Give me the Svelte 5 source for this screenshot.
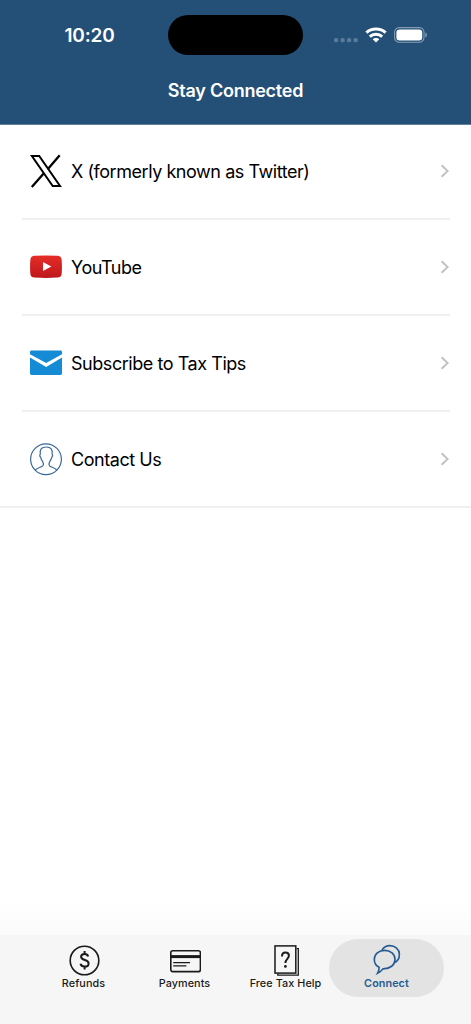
<script>
  const links = [
    { id: 'x', label: 'X (formerly known as Twitter)' },
    { id: 'youtube', label: 'YouTube' },
    { id: 'mail', label: 'Subscribe to Tax Tips' },
    { id: 'contact', label: 'Contact Us' }
  ];

  const tabs = [
    { id: 'refunds', label: 'Refunds' },
    { id: 'payments', label: 'Payments' },
    { id: 'help', label: 'Free Tax Help' },
    { id: 'connect', label: 'Connect' }
  ];

  let active = $state('connect');
</script>

<div class="screen">
  <header>
    <div class="status">
      <span class="time">10:20</span>
      <div class="island"></div>
      <div class="indicators">
        <svg class="signal" width="25" height="6" viewBox="0 0 25 6" fill="#587a9b">
          <rect x="0" y="1" width="4.2" height="4.2" rx="1.5" />
          <rect x="6.5" y="1" width="4.2" height="4.2" rx="1.5" />
          <rect x="13" y="1" width="4.2" height="4.2" rx="1.5" />
          <rect x="19.5" y="1" width="4.2" height="4.2" rx="1.5" />
        </svg>
        <svg class="wifi" width="22" height="16" viewBox="0 0 22 16" fill="none" stroke="#fff" stroke-width="3">
          <path d="M1.4 5.7C6.7.9 15.3.9 20.6 5.7" />
          <path d="M4.8 9.6C8.2 6.4 13.8 6.4 17.2 9.6" />
          <path d="M11 15.6 7.7 12.3C9.5 10.5 12.5 10.5 14.3 12.3Z" fill="#fff" stroke="none" />
        </svg>
        <svg class="battery" width="34" height="16" viewBox="0 0 34 16">
          <rect x=".6" y=".6" width="29.4" height="14.6" rx="4.7" fill="none" stroke="#869db5" stroke-width="1.1" />
          <rect x="2.4" y="2.4" width="25.8" height="11" rx="3.2" fill="#fff" />
          <path d="M31.3 5.4Q33 6 33 7.9T31.3 10.4Z" fill="#869db5" />
        </svg>
      </div>
    </div>
    <h1>Stay Connected</h1>
  </header>

  <main>
    {#each links as link}
      <div class="row">
        <div class="row-inner">
          <svg class="row-icon" width="32" height="34" viewBox="0 0 32 34">
            {#if link.id === 'x'}
              <g fill="none" stroke="#000" stroke-width="2">
                <path d="M1.9 2H9.2L30 32H22.7Z" />
                <path d="M29.7 1.2 17.7 15.2M14.1 19 1.8 32.9" stroke-width="2.3" />
              </g>
            {:else if link.id === 'youtube'}
              <defs>
                <linearGradient id="yt" x1="0" y1="0" x2="0" y2="1">
                  <stop offset="0" stop-color="#e52d27" />
                  <stop offset="1" stop-color="#bf171d" />
                </linearGradient>
              </defs>
              <path
                d="M4.5 5.8Q16 5 27.5 5.8Q31 6 31.6 9.2Q32.3 16.7 31.6 24.2Q31 27.4 27.5 27.6Q16 28.5 4.5 27.6Q1 27.4.4 24.2Q-.3 16.7.4 9.2Q1 6 4.5 5.8Z"
                fill="url(#yt)"
              />
              <path d="M13 12 21.3 16.4 13 20.9Z" fill="#fff" />
            {:else if link.id === 'mail'}
              <path d="M1.5 4.6H30.5Q32 4.6 32 6V8.3L16.2 17 0 8.3V6Q0 4.6 1.5 4.6Z" fill="#148bd4" />
              <path d="M0 11.6 16.2 21 32 11.6V27.6Q32 29 30.5 29H1.5Q0 29 0 27.6Z" fill="#148bd4" />
            {:else}
              <g fill="none" stroke="#38689b" stroke-width="1.2">
                <circle cx="16" cy="17.3" r="15.4" />
                <path d="M5.2 28C7.5 25.6 11.5 25.2 12.8 23.9C13.6 22.8 13.4 20.8 12.6 19.4C11.5 18.2 11 17 10.7 15.4C9.8 14.5 9.7 12.8 10.3 11.9C9.7 7.6 11.2 5 16.2 5S22.7 7.6 22.1 11.9C22.7 12.8 22.6 14.5 21.7 15.4C21.4 17 20.9 18.2 19.8 19.4C19 20.8 18.8 22.8 19.6 23.9C20.9 25.2 24.5 25.6 26.8 28" />
              </g>
            {/if}
          </svg>
          <span class="label">{link.label}</span>
          <svg class="chevron" width="10" height="14" viewBox="0 0 10 14">
            <path d="M1.6 1.2 7.6 7 1.6 12.8" fill="none" stroke="#c2c2c4" stroke-width="2" />
          </svg>
        </div>
      </div>
    {/each}
  </main>

  <div class="fade"></div>
  <nav>
    {#each tabs as tab}
      <button class="tab" class:active={active === tab.id} onclick={() => (active = tab.id)}>
        <svg width="32" height="32" viewBox="0 0 32 32" fill="none" stroke="currentColor">
          {#if tab.id === 'refunds'}
            <circle cx="16.5" cy="16.5" r="14.3" stroke-width="1.6" />
            <path d="M20.2 12.5C19.7 10.7 18.4 9.9 16.6 9.9C14.4 9.9 13.1 11 13.1 12.7C13.1 16.9 20.6 15.2 20.6 19.4C20.6 21.4 19 22.6 16.6 22.6C14.4 22.6 12.9 21.6 12.5 19.8M16.6 7V10.2M16.6 22.3V25.5" stroke-width="2" />
          {:else if tab.id === 'payments'}
            <rect x="1.8" y="6.7" width="29.6" height="20.9" rx="2" stroke-width="1.6" />
            <path d="M1.8 12.6H31.4" stroke-width="3" />
            <path d="M4.2 18.7H21M4.2 21.9H17.4" stroke-width="1.2" />
          {:else if tab.id === 'help'}
            <rect x="5" y="1.9" width="20.8" height="27.2" stroke-width="1.5" />
            <path d="M26.5 4.6H28.3V31.2H7.8V29.8" stroke-width="1.3" />
            <path d="M12 12.4C12 9.8 13.3 8.6 15.4 8.6C17.6 8.6 18.9 9.8 18.9 11.8C18.9 14.8 15.4 15 15.4 19" stroke-width="2" />
            <circle cx="15.4" cy="22.4" r="1.4" fill="currentColor" stroke="none" />
          {:else}
            <g stroke-width="1.6">
              <path d="M11 6C12.8 3.1 15.6 1.6 18.8 1.6C24.2 1.6 28.4 5.4 28.4 10.3C28.4 14.6 26 18 22.6 18.8" />
              <path d="M13.7 6.4C7.8 6.4 3.3 10.2 3.3 15.4C3.3 19 5.1 21.7 8.1 23.3C8.2 25.6 7.6 27.6 6.5 29.4C8.6 28.4 10.6 26.7 11.9 24.9C19 25 24 20.9 24 15.4C24 10.2 19.5 6.4 13.7 6.4Z" />
            </g>
          {/if}
        </svg>
        <span>{tab.label}</span>
      </button>
    {/each}
  </nav>
</div>

<style>
  :global(body) {
    margin: 0;
    background: #fff;
  }

  .screen {
    display: flex;
    flex-direction: column;
    height: 1024px;
    overflow: hidden;
    font-family: Inter, Roboto, sans-serif;
    color: #000;
  }

  header {
    box-sizing: border-box;
    flex: none;
    height: 125px;
    padding-top: 15px;
    background: #245077;
    border-bottom: 1px solid #63809b;
    color: #fff;
  }

  .status {
    display: grid;
    grid-template-columns: 168px 135px 1fr;
    height: 40px;
    align-items: center;
  }

  .time {
    padding-left: 11px;
    text-align: center;
    font-size: 19px;
    font-weight: 600;
    letter-spacing: -0.2px;
  }

  .island {
    height: 40px;
    border-radius: 20px;
    background: #000;
  }

  .indicators {
    display: flex;
    align-items: center;
    padding-left: 31px;
  }

  .signal {
    margin-top: 10px;
  }

  .wifi {
    margin-left: 6px;
  }

  .battery {
    margin-left: 7px;
  }

  h1 {
    margin: 24px 0 0;
    text-align: center;
    font-size: 18px;
    line-height: 24px;
    font-weight: 600;
    letter-spacing: -0.24px;
  }

  main {
    flex: 1;
    margin-top: -1px;
  }

  .row {
    padding: 0 21px 0 22px;
  }

  .row-inner {
    box-sizing: border-box;
    display: flex;
    align-items: center;
    height: 96px;
    padding: 0 0 1px 8px;
    border-bottom: 2px solid #f0f0f0;
  }

  .row:last-child {
    padding: 0;
  }

  .row:last-child .row-inner {
    padding: 0 21px 1px 30px;
  }

  .label {
    flex: 1;
    margin-left: 9px;
    padding-top: 2px;
    font-size: 18px;
    letter-spacing: -0.45px;
    white-space: nowrap;
  }

  .fade {
    height: 35px;
    background: linear-gradient(#fff, #fbfbfb);
  }

  nav {
    box-sizing: border-box;
    display: flex;
    flex: none;
    height: 89px;
    padding: 4px 27px 0 33px;
    background: #f6f6f6;
  }

  .tab {
    display: flex;
    flex-direction: column;
    align-items: center;
    width: 101px;
    height: 58px;
    flex: none;
    padding: 5px 0 0;
    border: 0;
    border-radius: 29px;
    background: none;
    color: #1a1a1a;
    font: 500 10.8px/16px Inter, Roboto, sans-serif;
    letter-spacing: 0.08px;
    white-space: nowrap;
  }

  .tab.active {
    width: 115px;
    margin-left: -7px;
    background: #e3e3e3;
    color: #265b92;
    font-weight: 600;
  }
</style>
